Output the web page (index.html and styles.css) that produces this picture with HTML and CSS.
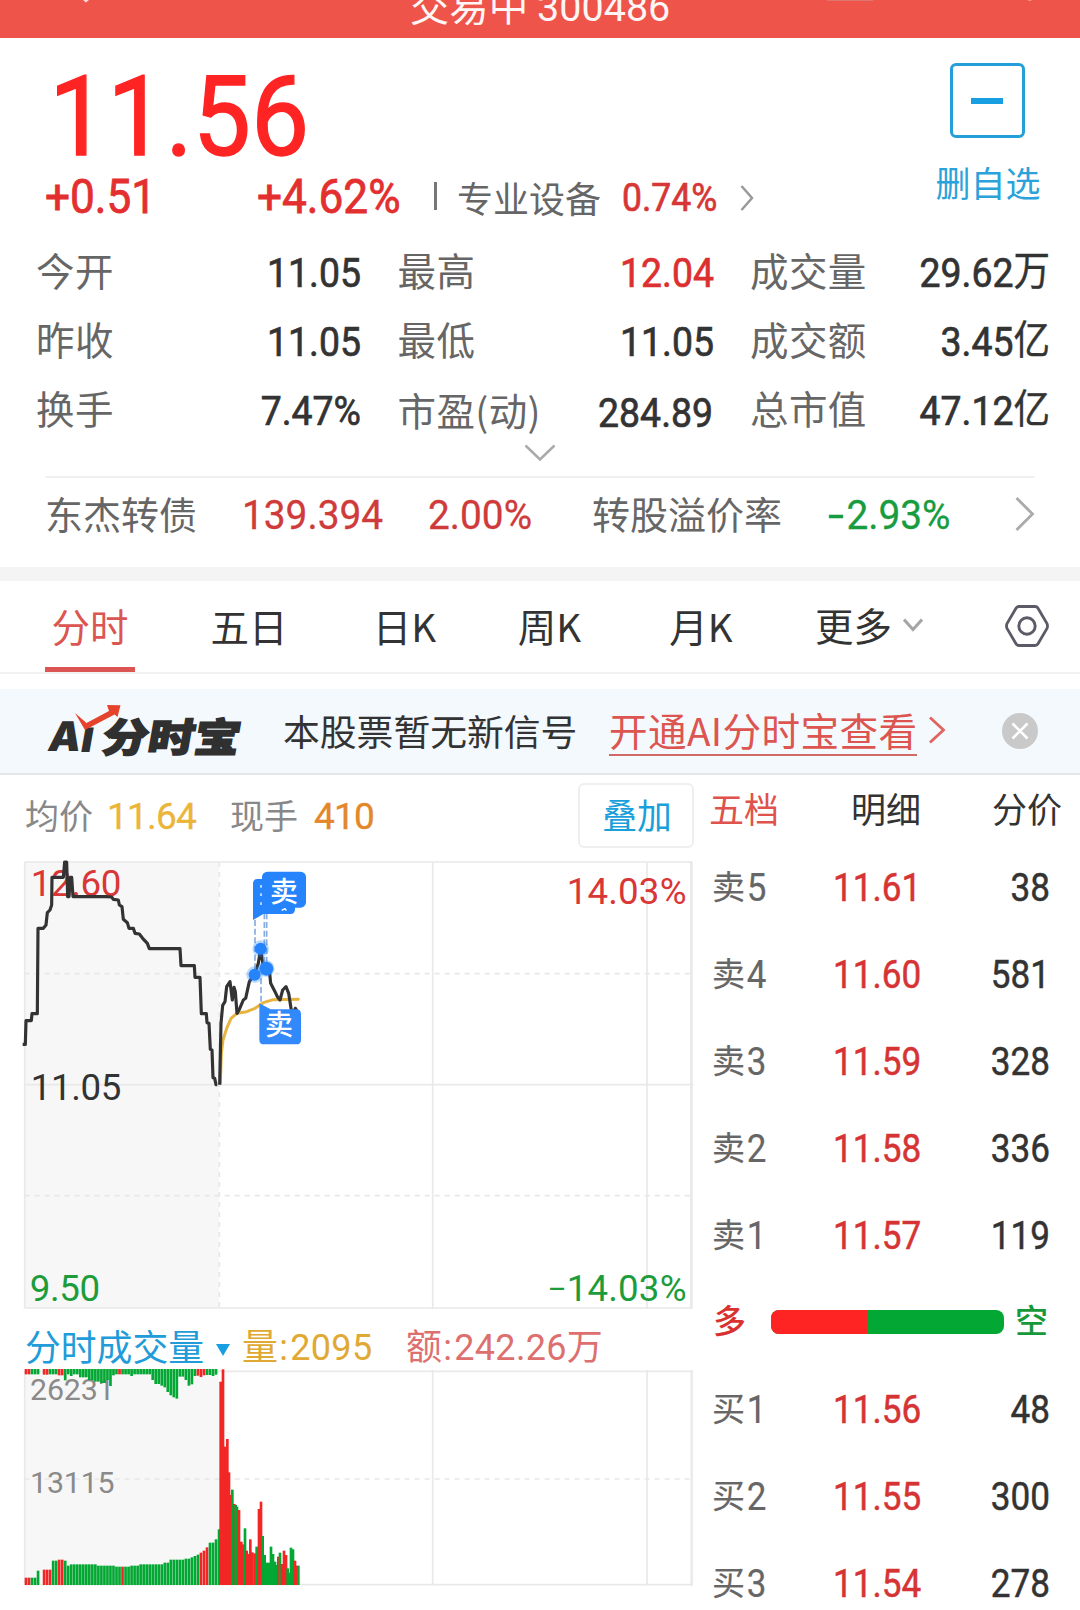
FILE: index.html
```html
<!DOCTYPE html>
<html lang="zh-CN">
<head>
<meta charset="utf-8">
<title>300486</title>
<link rel="stylesheet" href="styles.css">
</head>
<body>
<header class="topbar">
  <svg class="topbar-marks" width="1080" height="4" viewBox="0 0 1080 4"><path d="M83 0h6l-3 2.500z" fill="#fbdcd9"/><path d="M827 0h46" stroke="#d9827c" stroke-width="1.500"/><path d="M1027 0h5l-2 1z" fill="#f3a39d"/></svg>
  <span class="topbar-title">交易中 <i class="num">300486</i></span>
</header>

<section class="quote">
  <div class="quote-main">
    <div class="price num">11.56</div>
    <div class="change-row">
      <span class="change num">+0.51</span>
      <span class="change change-rate num">+4.62%</span>
      <span class="bar"></span>
      <span class="sector">专业设备</span>
      <span class="sector-rate num">0.74%</span>
      <svg class="sector-arrow" width="14" height="26" viewBox="0 0 14 26"><path d="M1.500 1L12 13 1.500 25" fill="none" stroke="#999" stroke-width="2.500"/></svg>
    </div>
  </div>
  <div class="watch">
    <div class="watch-box"><span class="watch-minus"></span></div>
    <span class="watch-label">删自选</span>
  </div>
</section>

<section class="stats">
  <div class="stat"><span class="k">今开</span><span class="v num">11.05</span></div>
  <div class="stat"><span class="k">最高</span><span class="v num red">12.04</span></div>
  <div class="stat"><span class="k">成交量</span><span class="v num">29.62<b class="unit">万</b></span></div>
  <div class="stat"><span class="k">昨收</span><span class="v num">11.05</span></div>
  <div class="stat"><span class="k">最低</span><span class="v num">11.05</span></div>
  <div class="stat"><span class="k">成交额</span><span class="v num">3.45<b class="unit">亿</b></span></div>
  <div class="stat"><span class="k">换手</span><span class="v num">7.47%</span></div>
  <div class="stat low"><span class="k">市盈(动)</span><span class="v num">284.89</span></div>
  <div class="stat"><span class="k">总市值</span><span class="v num">47.12<b class="unit">亿</b></span></div>
</section>
<div class="expand"><svg width="32" height="18" viewBox="0 0 32 18"><path d="M1.500 1.500L16 15.500 30.500 1.500" fill="none" stroke="#aaa" stroke-width="2.500"/></svg></div>

<section class="bond">
  <span class="bond-name">东杰转债</span>
  <span class="bond-num num bond-price">139.394</span>
  <span class="bond-num num bond-rate">2.00%</span>
  <span class="bond-name bond-label">转股溢价率</span>
  <span class="bond-num num bond-premium"><i class="minus">-</i>2.93%</span>
  <svg class="bond-arrow" width="20" height="34" viewBox="0 0 20 34"><path d="M1.500 1L17.500 17 1.500 33" fill="none" stroke="#aaa" stroke-width="2.800"/></svg>
</section>

<nav class="tabs">
  <span class="tab active">分时</span>
  <span class="tab">五日</span>
  <span class="tab">日K</span>
  <span class="tab">周K</span>
  <span class="tab">月K</span>
  <span class="tab more">更多<svg width="20" height="14" viewBox="0 0 20 14"><path d="M1 1.500L10 11.500 19 1.500" fill="none" stroke="#a5a5a5" stroke-width="3"/></svg></span>
  <svg class="gear" width="46" height="44" viewBox="0 0 46 44"><path d="M15 2.500H31Q33 2.500 34 4.200L43 19.500Q44 22 43 24.500L34 39.800Q33 41.500 31 41.500H15Q13 41.500 12 39.800L3 24.500Q2 22 3 19.500L12 4.200Q13 2.500 15 2.500Z" fill="none" stroke="#5c5a66" stroke-width="2.800"/><circle cx="23" cy="22" r="8.200" fill="none" stroke="#5c5a66" stroke-width="2.900"/></svg>
</nav>

<section class="banner">
  <div class="logo">
    <span class="logo-ai">A<i>I</i></span><span class="logo-cn">分时宝</span>
    <svg class="logo-arrow" width="48" height="27" viewBox="0 0 48 27"><path d="M1 9L12.500 19 35 7 33 1 46.500 1.200 43.500 13 40.500 10.500 11 26Z" fill="#e5432b"/></svg>
  </div>
  <span class="banner-text">本股票暂无新信号</span>
  <span class="banner-link">开通AI分时宝查看</span>
  <svg class="banner-arrow" width="18" height="28" viewBox="0 0 18 28"><path d="M2 1.500L15.500 14 2 26.500" fill="none" stroke="#e0645f" stroke-width="2.800"/></svg>
  <svg class="banner-close" width="36" height="36" viewBox="0 0 36 36"><circle cx="18" cy="18" r="18" fill="#c9c9c9"/><path d="M10.500 10.500l15 15M25.500 10.500l-15 15" stroke="#fff" stroke-width="2.600"/></svg>
</section>

<main class="board">
  <div class="charts">
    <div class="info">
      <span class="info-k">均价</span><span class="info-v num gold">11.64</span>
      <span class="info-k second">现手</span><span class="info-v num orange">410</span>
      <span class="overlay-btn">叠加</span>
    </div>

    <svg class="price-chart" width="700" height="468" viewBox="0 0 2100 1404">
      <rect x="74" y="36" width="583" height="1338" fill="#f7f7f7"/>
      <g class="grid-line">
        <path d="M74 36H2076M74 704H2080M74 1374H2076M74 36V1374M1298 36V1377M1941 36V1377"/>
        <path d="M2074 34V1377" stroke-width="8"/>
      </g>
      <path class="grid-dash" d="M74 371H2070M74 1037H2070M658 36V1374"/>
      <g class="axis">
        <text x="2060" y="161" class="fill-red end">14.03%</text>
        <text x="92" y="751" fill="#333">11.05</text>
        <text x="89" y="1354" class="fill-green">9.50</text>
        <text x="2060" y="1354" class="fill-green end"><tspan font-size="86" dy="-7">–</tspan><tspan dy="7">14.03%</tspan></text>
        <text x="92" y="139" class="fill-red">12.60</text>
      </g>
      <polyline class="avg" points="661,700 664,610 669,570 680,535 693,505 711,490 740,485 765,475 790,458 820,449 895,448"/>
      <polyline class="line" points="68,583 76,583 78,512 94,512 96,491 112,491 114,235 130,235 138,225 142,188 150,180 155,165 156,82 190,82 194,36 200,36 203,140 207,140 211,82 215,82 219,140 318,140 335,141 340,148 355,150 358,165 366,170 370,208 382,218 387,235 400,235 405,250 418,252 428,265 442,280 448,296 540,296 543,347 583,347 585,382 600,382 604,491 619,491 621,518 627,520 631,598 636,600 639,683 644,685 648,704 652,704"/>
      <polyline class="line" points="659,704 661,610 663,520 668,466 675,455 680,410 690,395 697,450 702,412 706,425 711,490 718,478 730,450 737,445 748,395 762,375 775,340 782,296 790,350 808,360 812,400 825,425 832,440 840,450 848,420 858,410 866,430 873,475 880,490 886,475 892,485"/>
      <path class="stem" d="M765 210V370M793 190V350M800 190V350M783 385V460"/>
      <g fill="#2583fb">
        <g fill-opacity=".3"><circle cx="782" cy="296" r="25"/><circle cx="764" cy="374" r="25"/><circle cx="799" cy="356" r="25"/></g>
        <circle cx="782" cy="296" r="18"/><circle cx="764" cy="374" r="18"/><circle cx="799" cy="356" r="21"/>
        <path d="M773 87H871Q885 87 885 101V178Q885 192 871 192H790L759 210V101Q759 87 773 87Z"/>
        <path d="M783 105v8M783 130v8M783 157v8M845 181l10-5 4 6" fill="none" stroke="#fff" stroke-width="4"/>
        <rect x="786" y="65" width="132" height="108" rx="16"/>
        <path d="M778 460L812 478H889Q903 478 903 492V569Q903 583 889 583H792Q778 583 778 569Z" fill="#3289fb"/>
      </g>
      <g class="flag"><text x="852" y="155">卖</text><text x="837" y="555">卖</text></g>
    </svg>

    <div class="vol-head">
      <span class="vol-title">分时成交量</span><span class="caret"></span>
      <span class="vol-amt num">量<i>:</i>2095</span>
      <span class="vol-sum num">额<i>:</i>242.26万</span>
    </div>

    <svg class="vol-chart" width="700" height="244" viewBox="0 258 2100 732">
      <rect x="74" y="274" width="583" height="640" fill="#f7f7f7"/>
      <g class="grid-line">
        <path d="M74 274H2078M74 914H2078M74 274V914M1298 270V917M1941 270V917"/>
        <path d="M2075 270V917" stroke-width="7"/>
      </g>
      <path class="grid-dash" d="M74 597H2070"/>
      <g class="vol-axis"><text x="90" y="361">26231</text><text x="90" y="638">13115</text></g>
      <g id="bars"></g>
    </svg>
  </div>

  <aside class="book">
    <div class="book-tabs"><span class="on">五档</span><span>明细</span><span>分价</span></div>
    <div class="row"><span class="side">卖<i class="num">5</i></span><span class="p num">11.61</span><span class="q num">38</span></div>
    <div class="row"><span class="side">卖<i class="num">4</i></span><span class="p num">11.60</span><span class="q num">581</span></div>
    <div class="row"><span class="side">卖<i class="num">3</i></span><span class="p num">11.59</span><span class="q num">328</span></div>
    <div class="row"><span class="side">卖<i class="num">2</i></span><span class="p num">11.58</span><span class="q num">336</span></div>
    <div class="row"><span class="side">卖<i class="num">1</i></span><span class="p num">11.57</span><span class="q num">119</span></div>
    <div class="ratio"><span class="long">多</span><div class="ratio-bar"><span class="ratio-long" style="width:41.2%"></span></div><span class="short">空</span></div>
    <div class="row"><span class="side">买<i class="num">1</i></span><span class="p num">11.56</span><span class="q num">48</span></div>
    <div class="row"><span class="side">买<i class="num">2</i></span><span class="p num">11.55</span><span class="q num">300</span></div>
    <div class="row"><span class="side">买<i class="num">3</i></span><span class="p num">11.54</span><span class="q num">278</span></div>
  </aside>
</main>
<script src="chart.js"></script>
</body>
</html>
```
FILE: styles.css
```css
* { box-sizing: border-box; }
body {
  margin: 0;
  width: 1080px;
  height: 1610px;
  overflow: hidden;
  background: #fff;
  color: #333;
  font-family: "Noto Sans CJK SC", "Noto Sans", sans-serif;
  line-height: 1;
  white-space: nowrap;
}
i, b { font-style: normal; font-weight: inherit; }
svg { display: block; flex: none; }
.num { font-family: Roboto, "Noto Sans CJK SC", sans-serif; }
.red { color: #dc3030; }

.topbar { position: relative; height: 38px; background: #ee544a; overflow: hidden; display: flex; justify-content: center; }
.topbar-marks { position: absolute; left: 0; top: 0; }
.topbar-title { color: #fff; font-size: 39.500px; line-height: 40px; margin-top: -16px; opacity: .95; }

.quote { height: 196px; display: flex; justify-content: space-between; padding: 0 41px 0 45px; }
.quote-main { padding-top: 15px; }
.price { height: 110px; line-height: 128px; font-size: 112px; color: #ff2424; margin-left: 4px; transform: scaleX(.925); transform-origin: 0 0; -webkit-text-stroke: 1.400px; }
.change-row { height: 60px; display: flex; align-items: center; line-height: 60px; }
.change { width: 212px; font-size: 48px; color: #e32f2f; padding-top: 7px; transform: scaleX(.92); transform-origin: 0 0; -webkit-text-stroke: .8px; }
.change-rate { width: 177px; }
.bar { width: 3px; height: 28px; background: #777; margin-top: 6px; }
.sector { font-size: 36px; color: #666; margin-left: 20px; padding-top: 8px; }
.sector-rate { font-size: 39.500px; color: #d63636; margin-left: 21px; padding-top: 9px; width: 118px; transform: scaleX(.9); transform-origin: 0 0; -webkit-text-stroke: .7px; }
.sector-arrow { margin-top: 10px; }
.watch { display: flex; flex-direction: column; align-items: center; width: 104px; padding-top: 25px; }
.watch-box { width: 75px; height: 75px; border: 3px solid #259fd9; border-radius: 6px; display: flex; align-items: center; justify-content: center; }
.watch-minus { width: 32px; height: 6px; background: #189fe2; }
.watch-label { font-size: 35px; line-height: 40px; margin: 24px 0 0 2px; color: #2ba2da; }

.stats { display: grid; grid-template-columns: 325px 316px 300px; grid-auto-rows: 69px; justify-content: space-between; padding: 0 30px 0 36px; }
.stat { display: flex; justify-content: space-between; align-items: flex-start; }
.stat.low { padding-top: 2px; }
.k { font-size: 38.500px; letter-spacing: .4px; line-height: 71px; color: #666; }
.v { font-size: 41px; line-height: 78px; transform: scaleX(.912); transform-origin: 100% 0; -webkit-text-stroke: .7px; }
.unit { font-size: 40px; position: relative; top: -2px; -webkit-text-stroke: .4px; }
.expand { height: 35px; padding-top: 3px; display: flex; justify-content: center; }

.bond { height: 91px; margin: 0 45px; border-top: 2px solid #f0f0f0; display: flex; }
.bond-name { font-size: 38px; line-height: 70px; color: #666; }
.bond-num { font-size: 40px; line-height: 75px; color: #cf3a3a; transform: scaleX(.97); transform-origin: 0 0; -webkit-text-stroke: .3px; }
.bond-price { margin-left: 45px; width: 186px; }
.bond-rate { width: 165px; }
.bond-label { width: 236px; }
.bond-premium { color: #179c40; width: 188px; }
.minus { display: inline-block; width: 19px; transform: scaleX(1.500); transform-origin: 0 50%; }
.bond-arrow { margin-top: 19px; }

.tabs { border-top: 14px solid #f4f4f4; border-bottom: 2px solid #f2f2f2; height: 107px; display: grid; grid-template-columns: 90px 228px 83px 207px 96px 256px 46px; padding-left: 45px; }
.tab { height: 91px; border-bottom: 5px solid transparent; line-height: 89px; font-size: 38.500px; text-align: center; }
.tab.active { color: #db5552; border-color: #db5552; }
.tab.more { display: flex; align-items: center; padding-left: 66px; }
.tab.more svg { margin-left: 11px; margin-top: 1px; }
.gear { margin-top: 23px; margin-left: -1px; }

.banner { margin-top: 15px; height: 86px; background: #f4f9fd; border-bottom: 2px solid #e4e7ea; display: flex; line-height: 82px; padding-left: 47px; }
.logo { position: relative; width: 236px; display: flex; font-weight: 900; color: #303030; }
.logo-ai { font-family: Inter, sans-serif; font-size: 41px; width: 57px; padding-left: 3px; transform: skewX(-10deg); line-height: 94px; }
.logo-ai i { font-size: 31px; margin-left: 2px; -webkit-text-stroke: 2px #303030; }
.logo-cn { font-size: 46px; height: 84px; transform: skewX(-10deg) scaleY(.86); -webkit-text-stroke: 1.800px #303030; line-height: 93px; }
.logo-arrow { position: absolute; left: 27px; top: 15px; }
.banner-text { font-size: 36.800px; width: 326px; }
.banner-link { font-size: 38.600px; letter-spacing: .4px; line-height: 81px; color: #dc5550; height: 67px; border-bottom: 2px solid #cf6a66; }
.banner-arrow { margin: 27px 0 0 11px; }
.banner-close { margin: 24px 0 0 56px; }

.board { display: flex; }
.charts { width: 700px; }
.info { height: 75px; display: flex; padding: 0 6px 0 25px; }
.info-k { font-size: 34px; line-height: 79px; color: #888; }
.info-v { font-size: 37px; line-height: 83px; margin-left: 14px; letter-spacing: -.8px; -webkit-text-stroke: .3px; }
.info-k.second { margin-left: 34px; }
.gold { color: #ebb53a; }
.orange { color: #e2872a; margin-left: 16px; }
.overlay-btn { margin: 8px 0 0 auto; width: 116px; height: 65px; border: 2px solid #efefef; border-radius: 6px; font-size: 34.800px; line-height: 58px; padding-left: 2px; text-align: center; color: #1a9fdb; }

.grid-line { fill: none; stroke: #e9e9e9; stroke-width: 5; }
.grid-dash { fill: none; stroke: #e8e8e8; stroke-width: 5; stroke-dasharray: 15 15; }
.axis { font-family: Roboto, sans-serif; font-size: 110px; letter-spacing: -1px; }
.end { text-anchor: end; letter-spacing: .5px; }
.fill-red { fill: #d93636; }
.fill-green { fill: #1d9c3c; }
.avg { fill: none; stroke: #e8b440; stroke-width: 9; stroke-linecap: round; stroke-linejoin: round; }
.line { fill: none; stroke: #333; stroke-width: 9.500; stroke-linejoin: round; }
.stem { fill: none; stroke: #86addf; stroke-width: 5; stroke-dasharray: 18 8; }
.flag { font-size: 84px; font-weight: 500; fill: #fff; text-anchor: middle; }

.vol-head { height: 48px; display: flex; font-size: 36px; }
.vol-title { color: #219cd8; font-size: 35.800px; line-height: 54px; margin-left: 25px; }
.caret { border: 7px solid transparent; border-top: 12px solid #189fe2; border-bottom: 0; height: 12px; margin: 26px 0 0 12px; }
.vol-head i { display: inline-block; width: 11px; margin-left: 1px; }
.vol-amt, .vol-sum { line-height: 61px; letter-spacing: .3px; }
.vol-amt { color: #e0a933; margin-left: 12px; width: 164px; }
.vol-sum { color: #dd6f6f; }
.vol-axis { font-family: Roboto, sans-serif; font-size: 91px; fill: #8a8a8a; letter-spacing: -.5px; }

.book { width: 380px; }
.book-tabs { height: 68px; display: grid; grid-template-columns: 142px 141px 80px; padding-left: 9px; font-size: 35px; line-height: 66px; }
.book-tabs .on { color: #e0524c; }
.row { height: 87px; display: flex; }
.side { font-size: 33px; line-height: 84px; color: #666; padding-left: 12px; width: 133px; -webkit-text-stroke: .2px; }
.side i { display: inline-block; line-height: 40px; font-size: 38px; margin-left: 1px; position: relative; top: 2px; transform: scaleX(.92); }
.p, .q { font-size: 39px; line-height: 90px; transform: scaleX(.9); -webkit-text-stroke: .5px; }
.p { color: #d63434; width: 117px; transform-origin: 0 0; }
.q { width: 100px; text-align: right; transform-origin: 100% 0; }
.ratio { height: 87px; display: flex; align-items: center; font-size: 33px; line-height: 40px; font-weight: 500; padding-left: 13px; }
.long { color: #d93030; width: 58px; padding-bottom: 5px; }
.short { color: #17993a; margin-left: 11px; padding-bottom: 5px; }
.ratio-bar { width: 233px; height: 24px; border-radius: 8px; overflow: hidden; background: #03a733; display: flex; }
.ratio-long { background: #ff2424; }
```
FILE: chart.js
```js
const RED = "#f32626", GREEN = "#03a733";
// Each run: colour, edge of the bar, number of bars ("-" leaves a gap).
const auction = [["R",893,2],["G",893,2],["G",872,1],["-",0,1],["R",869,3],["G",842,2],["R",839,2],["G",842,1],["G",857,1],["G",853,9],["G",857,6],["G",860,2],["R",860,1],["G",860,2],["G",857,3],["G",853,8],["G",848,2],["G",839,5],["G",836,2],["G",832,1],["G",828,1],["G",824,1],["R",818,1],["R",812,1],["R",802,1],["G",788,2],["G",778,1],["G",748,1]];
const unmatched = [["R",283,2],["G",283,3],["-",0,1],["R",284,2],["G",283,3],["R",286,2],["G",301,1],["G",283,1],["G",288,1],["G",283,2],["G",292,3],["G",300,2],["G",305,2],["G",309,2],["G",300,1],["G",318,1],["G",286,1],["G",283,1],["R",283,1],["G",283,3],["G",288,1],["G",283,6],["G",300,1],["G",312,2],["G",317,1],["G",322,1],["G",336,1],["G",346,1],["G",352,1],["G",356,1],["G",290,2],["G",300,1],["G",317,1],["G",313,1],["G",288,1],["R",287,1],["R",291,1],["R",286,1],["G",285,2],["G",288,1],["G",284,1]];
const trades = [[662,305,"R"],[669,268,"R"],[675,500,"R"],[682,477,"R"],[687,577,"R"],[691,645,"R"],[697,629,"G"],[703,672,"R"],[707,675,"G"],[711,680,"G"],[717,690,"R"],[724,785,"R"],[730,793,"R"],[735,745,"G"],[740,812,"R"],[745,822,"R"],[751,778,"R"],[757,817,"R"],[764,820,"R"],[770,800,"G"],[777,687,"R"],[783,665,"R"],[788,768,"G"],[794,825,"G"],[800,848,"G"],[806,848,"G"],[813,800,"G"],[819,822,"G"],[825,845,"G"],[830,855,"G"],[835,830,"R"],[840,818,"G"],[846,852,"R"],[852,812,"R"],[858,825,"R"],[863,865,"G"],[868,878,"G"],[873,803,"G"],[879,808,"G"],[885,842,"R"],[891,857,"R"],[895,857,"G"]];
const layer = document.getElementById("bars");
function bar(x, y1, y2, c, w) {
  const r = document.createElementNS("http://www.w3.org/2000/svg", "rect");
  r.setAttribute("x", x - w / 2);
  r.setAttribute("y", Math.min(y1, y2));
  r.setAttribute("width", w);
  r.setAttribute("height", Math.abs(y2 - y1));
  r.setAttribute("fill", c === "R" ? RED : GREEN);
  layer.appendChild(r);
}
function runs(list, base) {
  let n = 0;
  for (const [c, y, count] of list)
    for (let i = 0; i < count; i++, n++)
      if (c !== "-") bar(78 + n * 9.05, base, y, c, 8);
}
runs(auction, 915);
runs(unmatched, 267);
for (const [x, y, c] of trades) bar(x, 915, y, c, 8);
```
